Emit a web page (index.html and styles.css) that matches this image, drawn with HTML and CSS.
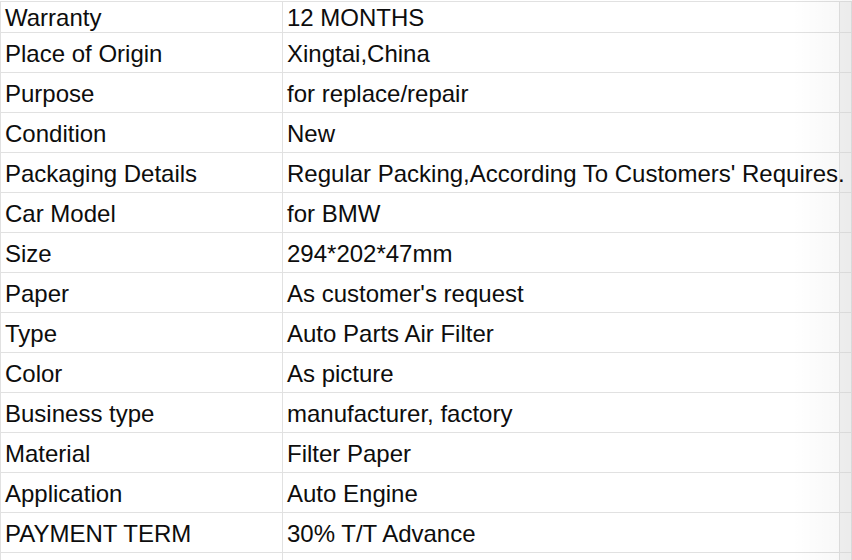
FILE: index.html
```html
<!DOCTYPE html>
<html>
<head>
<meta charset="utf-8">
<link rel="stylesheet" href="styles.css">
</head>
<body>
<div class="sheet">
  <div class="grid">
    <div class="row first"><div class="cell key">Warranty</div><div class="cell val">12 MONTHS</div><div class="cell pad"></div></div>
    <div class="row"><div class="cell key">Place of Origin</div><div class="cell val">Xingtai,China</div><div class="cell pad"></div></div>
    <div class="row"><div class="cell key">Purpose</div><div class="cell val">for replace/repair</div><div class="cell pad"></div></div>
    <div class="row"><div class="cell key">Condition</div><div class="cell val">New</div><div class="cell pad"></div></div>
    <div class="row"><div class="cell key">Packaging Details</div><div class="cell val">Regular Packing,According To Customers' Requires.</div><div class="cell pad"></div></div>
    <div class="row"><div class="cell key">Car Model</div><div class="cell val">for BMW</div><div class="cell pad"></div></div>
    <div class="row"><div class="cell key">Size</div><div class="cell val">294*202*47mm</div><div class="cell pad"></div></div>
    <div class="row"><div class="cell key">Paper</div><div class="cell val">As customer's request</div><div class="cell pad"></div></div>
    <div class="row"><div class="cell key">Type</div><div class="cell val">Auto Parts Air Filter</div><div class="cell pad"></div></div>
    <div class="row"><div class="cell key">Color</div><div class="cell val">As picture</div><div class="cell pad"></div></div>
    <div class="row"><div class="cell key">Business type</div><div class="cell val">manufacturer, factory</div><div class="cell pad"></div></div>
    <div class="row"><div class="cell key">Material</div><div class="cell val">Filter Paper</div><div class="cell pad"></div></div>
    <div class="row"><div class="cell key">Application</div><div class="cell val">Auto Engine</div><div class="cell pad"></div></div>
    <div class="row"><div class="cell key">PAYMENT TERM</div><div class="cell val">30% T/T Advance</div><div class="cell pad"></div></div>
    <div class="row"><div class="cell key"></div><div class="cell val"></div><div class="cell pad"></div></div>
  </div>
  <div class="fade"></div>
</div>
</body>
</html>
```
FILE: styles.css
```css
html, body {
  margin: 0;
  padding: 0;
  background: #ffffff;
  overflow: hidden;
}
.sheet {
  position: relative;
  width: 852px;
  height: 560px;
  overflow: hidden;
  padding-top: 1px;
  box-sizing: border-box;
}
.grid {
  display: flex;
  flex-direction: column;
  border-top: 1px solid #e1e1e1;
  border-left: 1px solid #e1e1e1;
}
.row {
  display: grid;
  grid-template-columns: 282px 557px 1fr;
  height: 40px;
}
.row.first {
  height: 31px;
}
.cell {
  box-sizing: border-box;
  border-right: 1px solid #e1e1e1;
  border-bottom: 1px solid #e1e1e1;
  padding: 8px 4px 0 4px;
  font-family: "Liberation Sans", Arial, sans-serif;
  font-size: 24px;
  line-height: 26px;
  color: #0d0d0d;
  white-space: nowrap;
  overflow: visible;
  position: relative;
}
.row.first .cell {
  padding-top: 3px;
}
.cell.val {
  z-index: 1;
}
.cell.pad {
  background: #f4f4f4;
}
.fade {
  position: absolute;
  top: 0;
  right: 0;
  width: 60px;
  height: 100%;
  background: linear-gradient(to right, rgba(0,0,0,0), rgba(0,0,0,0.035));
  pointer-events: none;
  z-index: 2;
}
```
